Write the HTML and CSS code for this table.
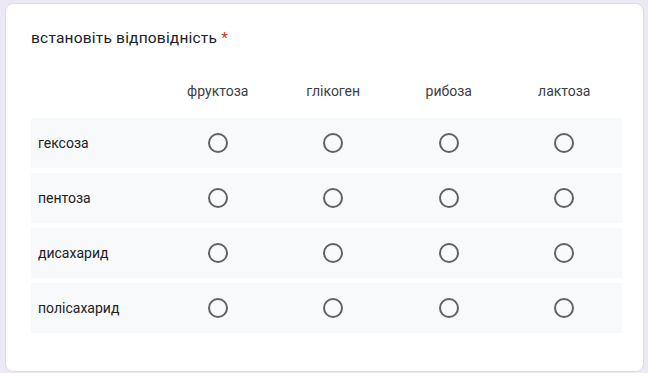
FILE: index.html
```html
<!DOCTYPE html>
<html lang="uk">
<head>
  <meta charset="UTF-8">
  <meta name="viewport" content="width=device-width, initial-scale=1.0">
  <title>Тест</title>
  <link rel="stylesheet" href="styles.css">
</head>
<body>
  <div class="card">
    <div class="question-title">встановіть відповідність <span class="required">*</span></div>

    <div class="grid">
      <div class="grid-head">
        <div class="cell label"></div>
        <div class="cell">фруктоза</div>
        <div class="cell">глікоген</div>
        <div class="cell">рибоза</div>
        <div class="cell">лактоза</div>
      </div>

      <div class="grid-row">
        <div class="cell label">гексоза</div>
        <div class="cell"><span class="radio"></span></div>
        <div class="cell"><span class="radio"></span></div>
        <div class="cell"><span class="radio"></span></div>
        <div class="cell"><span class="radio"></span></div>
      </div>

      <div class="grid-row">
        <div class="cell label">пентоза</div>
        <div class="cell"><span class="radio"></span></div>
        <div class="cell"><span class="radio"></span></div>
        <div class="cell"><span class="radio"></span></div>
        <div class="cell"><span class="radio"></span></div>
      </div>

      <div class="grid-row">
        <div class="cell label">дисахарид</div>
        <div class="cell"><span class="radio"></span></div>
        <div class="cell"><span class="radio"></span></div>
        <div class="cell"><span class="radio"></span></div>
        <div class="cell"><span class="radio"></span></div>
      </div>

      <div class="grid-row">
        <div class="cell label">полісахарид</div>
        <div class="cell"><span class="radio"></span></div>
        <div class="cell"><span class="radio"></span></div>
        <div class="cell"><span class="radio"></span></div>
        <div class="cell"><span class="radio"></span></div>
      </div>
    </div>
  </div>
</body>
</html>
```

FILE: styles.css
```css
body {
  background: #ece9f4;
  margin: 0;
  padding: 3px 4px 1px 5px;
  font-family: Roboto, Arial, sans-serif;
  color: #202124;
}

.card {
  background: #fff;
  border: 1px solid #dadce0;
  border-radius: 8px;
  padding: 22px 21px 37px 25px;
  box-sizing: border-box;
  height: 369px;
}

.question-title {
  font-size: 15.5px;
  line-height: 24px;
  letter-spacing: 0.2px;
}

.required {
  color: #d93025;
}

.grid {
  margin-top: 15px;
  display: flex;
  flex-direction: column;
  gap: 5px;
}

.grid-head,
.grid-row {
  display: grid;
  grid-template-columns: 129px repeat(4, 1fr);
  align-items: center;
}

.grid-head {
  height: 44px;
  padding-top: 4px;
  font-size: 14px;
  color: #3c4043;
}

.grid-row {
  height: 50px;
  background: #f8f9fa;
  font-size: 14px;
}

.cell {
  text-align: center;
}

.cell.label {
  text-align: left;
  padding-left: 7px;
}

.radio {
  display: inline-block;
  width: 16px;
  height: 16px;
  border: 2px solid #5f6368;
  border-radius: 50%;
  vertical-align: middle;
}
```
